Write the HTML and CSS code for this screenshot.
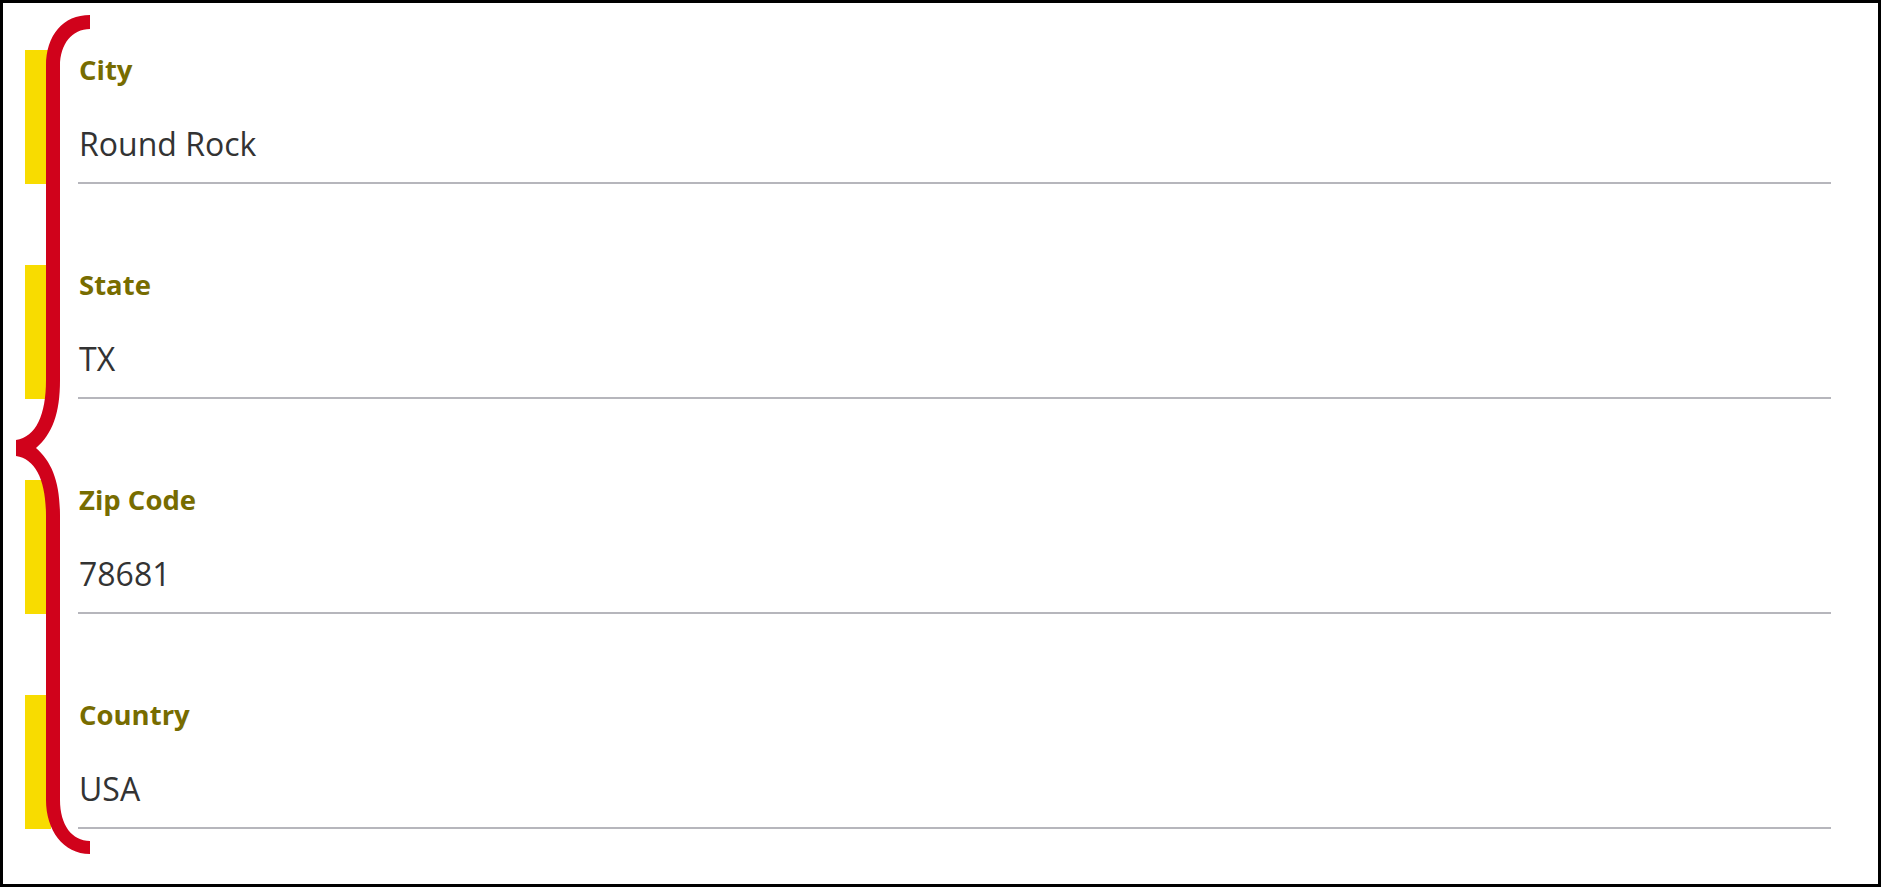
FILE: index.html
```html
<!DOCTYPE html>
<html lang="en">
<head>
    <meta charset="UTF-8">
    <title>Address fields</title>
    <link rel="stylesheet" href="styles.css">
</head>
<body>
    <div class="frame">

        <!-- Brace annotation over the field markers -->
        <svg class="brace" width="100" height="870" viewBox="0 0 100 870">
            <path d="M90 15 C63 15 46 35 46 66 L46 380 C46 415 36 437 16 440 L16 456 C36 459 46 481 46 516 L46 800 C46 830 63 854 90 854 L90 841 C72 841 60 825 60 800 L60 516 C60 482 52 462 36 448 C52 434 60 414 60 380 L60 66 C60 44 72 29 90 29 Z" fill="#d0021b"/>
        </svg>

        <div class="row">
            <div class="marker"></div>
            <div class="field">
                <div class="field-label">City</div>
                <div class="field-value">Round Rock</div>
            </div>
        </div>

        <div class="row">
            <div class="marker"></div>
            <div class="field">
                <div class="field-label">State</div>
                <div class="field-value">TX</div>
            </div>
        </div>

        <div class="row">
            <div class="marker"></div>
            <div class="field">
                <div class="field-label">Zip Code</div>
                <div class="field-value">78681</div>
            </div>
        </div>

        <div class="row">
            <div class="marker"></div>
            <div class="field">
                <div class="field-label">Country</div>
                <div class="field-value">USA</div>
            </div>
        </div>

    </div>
</body>
</html>
```

FILE: styles.css
```css
/* Page frame */
body {
    margin: 0;
    font-family: 'Open Sans', 'Liberation Sans', sans-serif;
    background-color: #fff;
}

.frame {
    position: relative;
    box-sizing: border-box;
    width: 1881px;
    height: 887px;
    border: 3px solid #000;
    padding: 47px 47px 0 22px;
    display: flex;
    flex-direction: column;
    gap: 81px;
}

/* One field row: yellow marker + label/value */
.row {
    display: flex;
    gap: 27px;
}

.marker {
    width: 26px;
    background-color: #f8dc00;
}

.field {
    flex: 1;
    padding: 2px 0 18px 1px;
    border-bottom: 2px solid #b6b6bc;
}

.field-label {
    font-size: 27.5px;
    line-height: 36px;
    font-weight: bold;
    color: #776c00;
}

.field-value {
    margin-top: 36px;
    font-size: 32px;
    line-height: 40px;
    color: #333;
}

/* Red brace drawn on top */
.brace {
    position: absolute;
    top: -3px;
    left: -3px;
}
```
